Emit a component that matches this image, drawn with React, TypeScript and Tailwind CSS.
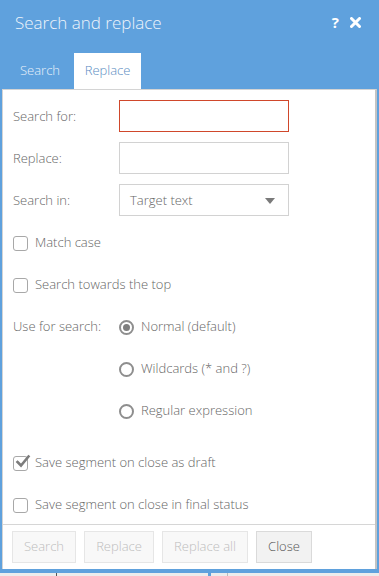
import React from "react";

const font = { fontFamily: '"Open Sans", "Noto Sans", sans-serif' };

function Checkbox({ checked }: { checked?: boolean }) {
  return (
    <span className="relative inline-block w-[15px] h-[15px] shrink-0">
      <span className="absolute inset-0 rounded-[3px] border-[1.5px] border-[#a8a8a8] bg-white" />
      {checked && (
        <svg className="absolute left-[1px] top-[-3px]" width="17" height="17" viewBox="0 0 17 17">
          <path d="M3.5 9 L7 12.5 L14.5 3.5" fill="none" stroke="#7c7c7c" strokeWidth="2.6" strokeLinecap="square" />
        </svg>
      )}
    </span>
  );
}

function Radio({ checked }: { checked?: boolean }) {
  return (
    <span className="flex items-center justify-center w-[15px] h-[15px] rounded-full border-2 border-[#8e8e8e] shrink-0">
      {checked && <span className="w-[7px] h-[7px] rounded-full bg-[#7e7e7e]" />}
    </span>
  );
}

export default function App() {
  return (
    <div className="w-[379px] h-[576px] bg-[#5fa1dd] flex flex-col overflow-hidden" style={font}>
      {/* header */}
      <div className="h-[45px] flex items-center justify-between pl-[15px] pr-[18px] shrink-0">
        <span className="text-[17px] font-light text-[#eef4fb] leading-none">Search and replace</span>
        <div className="flex items-center gap-[11px] text-white">
          <span className="text-[15px] font-bold leading-none">?</span>
          <svg width="11" height="11" viewBox="0 0 11 11">
            <path d="M1.5 1.5 L9.5 9.5 M9.5 1.5 L1.5 9.5" stroke="#fff" strokeWidth="3" strokeLinecap="round" />
          </svg>
        </div>
      </div>
      {/* tabs */}
      <div className="h-[44px] flex items-end pl-[6px] font-light shrink-0">
        <div className="h-[36px] px-[14px] flex items-center text-[13px] text-[#eaf1fa]">Search</div>
        <div className="h-[36px] w-[67px] flex items-center justify-center bg-white text-[13px] text-[#5b8cc2]">Replace</div>
      </div>
      {/* body */}
      <div className="mx-[2px] h-[480px] shrink-0 bg-white border-t border-l border-[#d4d4d4] border-r-2 border-r-[#c4c4c4] flex flex-col text-[13px] font-light text-[#666]">
        <div className="flex-1 min-h-0 overflow-hidden pl-[10px] pt-[10px] flex flex-col">
          <div className="flex items-center h-[32px] shrink-0">
            <span className="w-[106px] pt-[2px]">Search for:</span>
            <div className="w-[170px] h-[32px] border border-[#d0472b]" />
          </div>
          <div className="flex items-center h-[32px] mt-[10px] shrink-0">
            <span className="w-[106px] pt-[2px]">Replace:</span>
            <div className="w-[170px] h-[32px] border border-[#d2d2d2]" />
          </div>
          <div className="flex items-center h-[32px] mt-[10px] shrink-0">
            <span className="w-[106px] pt-[2px]">Search in:</span>
            <div className="w-[170px] h-[32px] border border-[#d2d2d2] flex items-center justify-between pl-[10px] pr-[13px] pt-[2px]">
              <span>Target text</span>
              <svg width="10" height="6" viewBox="0 0 10 6">
                <path d="M0 0 L10 0 L5 6 Z" fill="#7a7a7a" />
              </svg>
            </div>
          </div>
          <div className="flex items-center h-[42px] mt-[6px] gap-[7px] shrink-0">
            <Checkbox />
            <span>Match case</span>
          </div>
          <div className="flex items-center h-[42px] gap-[7px] shrink-0">
            <Checkbox />
            <span>Search towards the top</span>
          </div>
          <div className="flex items-center h-[42px] shrink-0">
            <span className="w-[106px]">Use for search:</span>
            <Radio checked />
            <span className="ml-[7px]">Normal (default)</span>
          </div>
          <div className="flex items-center h-[42px] pl-[106px] shrink-0">
            <Radio />
            <span className="ml-[7px]">Wildcards (* and ?)</span>
          </div>
          <div className="flex items-center h-[42px] pl-[106px] shrink-0">
            <Radio />
            <span className="ml-[7px]">Regular expression</span>
          </div>
          <div className="flex items-center h-[42px] mt-[10px] gap-[7px] shrink-0">
            <Checkbox checked />
            <span>Save segment on close as draft</span>
          </div>
          <div className="flex items-center h-[42px] gap-[7px] shrink-0">
            <Checkbox />
            <span>Save segment on close in final status</span>
          </div>
        </div>
        <div className="h-[45px] border-t border-[#d6d6d6] flex items-center pl-[9px] gap-[8px] shrink-0">
          <div className="h-[32px] w-[64px] flex items-center justify-center bg-[#f8f8f8] border border-[#e6e6e6] text-[#bdbdbd]">Search</div>
          <div className="h-[32px] w-[70px] flex items-center justify-center bg-[#f8f8f8] border border-[#e6e6e6] text-[#bdbdbd]">Replace</div>
          <div className="h-[32px] w-[86px] flex items-center justify-center bg-[#f8f8f8] border border-[#e6e6e6] text-[#bdbdbd]">Replace all</div>
          <div className="h-[32px] w-[56px] flex items-center justify-center bg-[#f2f2f2] border border-[#dadada] text-[#555]">Close</div>
        </div>
      </div>
      <div className="h-[4px] shrink-0" />
      <div className="flex-1 bg-[#ececec] relative">
        <div className="absolute left-[56px] top-0 bottom-0 w-px bg-[#555]" />
        <div className="absolute left-[208px] top-0 bottom-0 w-[3px] bg-[#5fa1dd]" />
        <div className="absolute left-[227px] top-0 bottom-0 w-px bg-[#bbb]" />
      </div>
    </div>
  );
}
